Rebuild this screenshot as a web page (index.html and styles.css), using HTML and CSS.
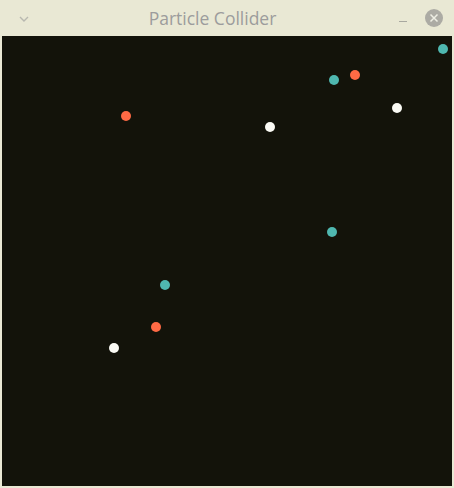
FILE: index.html
```html
<!DOCTYPE html>
<html>
<head>
<meta charset="utf-8">
<link rel="stylesheet" href="styles.css">
</head>
<body>
<div class="window">
  <div class="titlebar">
    <div class="menu">
      <svg width="10" height="6" viewBox="0 0 10 6"><path d="M1 1 L5 5 L9 1" fill="none" stroke="#b8b8b0" stroke-width="1.4"/></svg>
    </div>
    <div class="title">Particle Collider</div>
    <div class="controls">
      <span class="minimize"></span>
      <span class="close">
        <svg width="18" height="18" viewBox="0 0 18 18"><circle cx="9" cy="9" r="9" fill="#acaba4"/><path d="M5.5 5.5 L12.5 12.5 M12.5 5.5 L5.5 12.5" stroke="#eeeee4" stroke-width="1.5"/></svg>
      </span>
    </div>
  </div>
  <div class="canvas">
    <span class="dot teal" style="left:436px;top:8px"></span>
    <span class="dot teal" style="left:327px;top:39px"></span>
    <span class="dot orange" style="left:348px;top:34px"></span>
    <span class="dot orange" style="left:119px;top:75px"></span>
    <span class="dot white" style="left:390px;top:67px"></span>
    <span class="dot white" style="left:263px;top:86px"></span>
    <span class="dot teal" style="left:325px;top:191px"></span>
    <span class="dot teal" style="left:158px;top:244px"></span>
    <span class="dot orange" style="left:149px;top:286px"></span>
    <span class="dot white" style="left:107px;top:307px"></span>
  </div>
</div>
</body>
</html>
```

FILE: styles.css
```css
html, body {
  margin: 0;
  padding: 0;
  background: #e9e8d4;
}
.window {
  width: 454px;
  height: 488px;
  box-sizing: border-box;
  display: flex;
  flex-direction: column;
  background: #e9e8d4;
  padding: 0 2px 2px 2px;
}
.titlebar {
  height: 36px;
  flex: none;
  display: flex;
  align-items: center;
  position: relative;
}
.menu {
  width: 40px;
  padding-left: 17px;
  box-sizing: border-box;
  display: flex;
  align-items: center;
  margin-top: 1px;
}
.title {
  flex: 1;
  text-align: center;
  font-family: "Open Sans", "DejaVu Sans", sans-serif;
  font-size: 17.5px;
  color: #9c9c9c;
  padding-right: 16px;
  margin-top: 0;
}
.controls {
  display: flex;
  align-items: center;
  gap: 18px;
  padding-right: 9px;
}
.minimize {
  width: 8px;
  height: 1px;
  background: #a8a8a0;
  margin-top: 6px;
}
.close {
  display: flex;
}
.canvas {
  flex: 1;
  background: #13130a;
  position: relative;
  overflow: hidden;
}
.dot {
  position: absolute;
  width: 10px;
  height: 10px;
  border-radius: 50%;
}
.teal { background: #4fb8b0; }
.orange { background: #ff6a45; }
.white { background: #fbfbf5; }
```
